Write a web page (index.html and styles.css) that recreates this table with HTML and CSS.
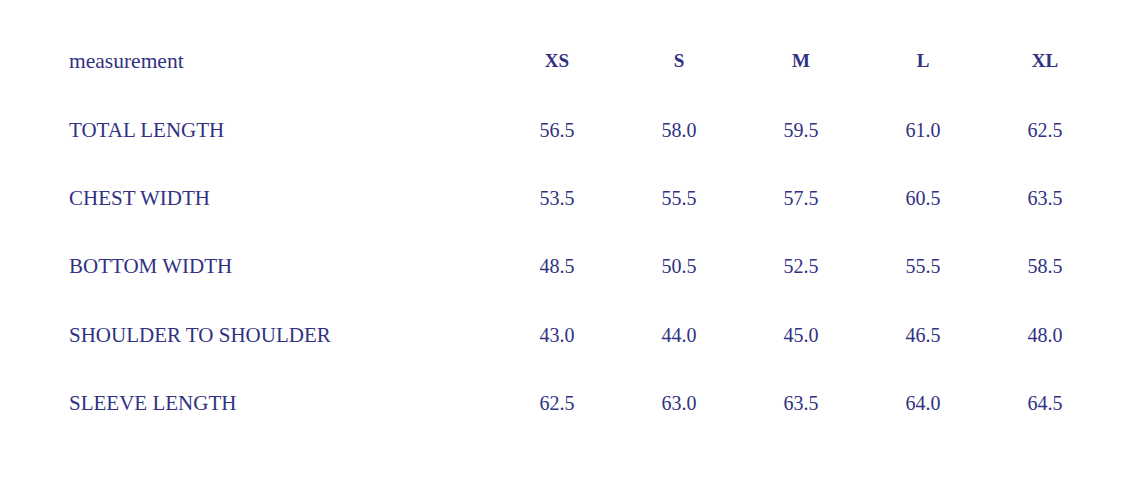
FILE: index.html
```html
<!DOCTYPE html>
<html>
<head>
<meta charset="utf-8">
<link rel="stylesheet" href="styles.css">
</head>
<body>
<div class="chart">
  <div class="cell label head">measurement</div>
  <div class="cell size">XS</div>
  <div class="cell size">S</div>
  <div class="cell size">M</div>
  <div class="cell size">L</div>
  <div class="cell size">XL</div>

  <div class="cell label">TOTAL LENGTH</div>
  <div class="cell val">56.5</div>
  <div class="cell val">58.0</div>
  <div class="cell val">59.5</div>
  <div class="cell val">61.0</div>
  <div class="cell val">62.5</div>

  <div class="cell label">CHEST WIDTH</div>
  <div class="cell val">53.5</div>
  <div class="cell val">55.5</div>
  <div class="cell val">57.5</div>
  <div class="cell val">60.5</div>
  <div class="cell val">63.5</div>

  <div class="cell label">BOTTOM WIDTH</div>
  <div class="cell val">48.5</div>
  <div class="cell val">50.5</div>
  <div class="cell val">52.5</div>
  <div class="cell val">55.5</div>
  <div class="cell val">58.5</div>

  <div class="cell label">SHOULDER TO SHOULDER</div>
  <div class="cell val">43.0</div>
  <div class="cell val">44.0</div>
  <div class="cell val">45.0</div>
  <div class="cell val">46.5</div>
  <div class="cell val">48.0</div>

  <div class="cell label">SLEEVE LENGTH</div>
  <div class="cell val">62.5</div>
  <div class="cell val">63.0</div>
  <div class="cell val">63.5</div>
  <div class="cell val">64.0</div>
  <div class="cell val">64.5</div>
</div>
</body>
</html>
```
FILE: styles.css
```css
html, body {
  margin: 0;
  padding: 0;
  background: #ffffff;
}
body {
  font-family: "Liberation Serif", "Times New Roman", serif;
  color: #313282;
}
.chart {
  display: grid;
  grid-template-columns: 427px repeat(5, 122px);
  grid-auto-rows: 68.4px;
  padding: 27px 0 0 69px;
  align-items: center;
}
.cell {
  font-size: 20px;
  line-height: 24px;
  white-space: nowrap;
}
.label {
  text-align: left;
  font-size: 21px;
}
.label.head {
  font-size: 21.5px;
}
.size {
  text-align: center;
  font-weight: bold;
  font-size: 19px;
}
.val {
  text-align: center;
}
```
